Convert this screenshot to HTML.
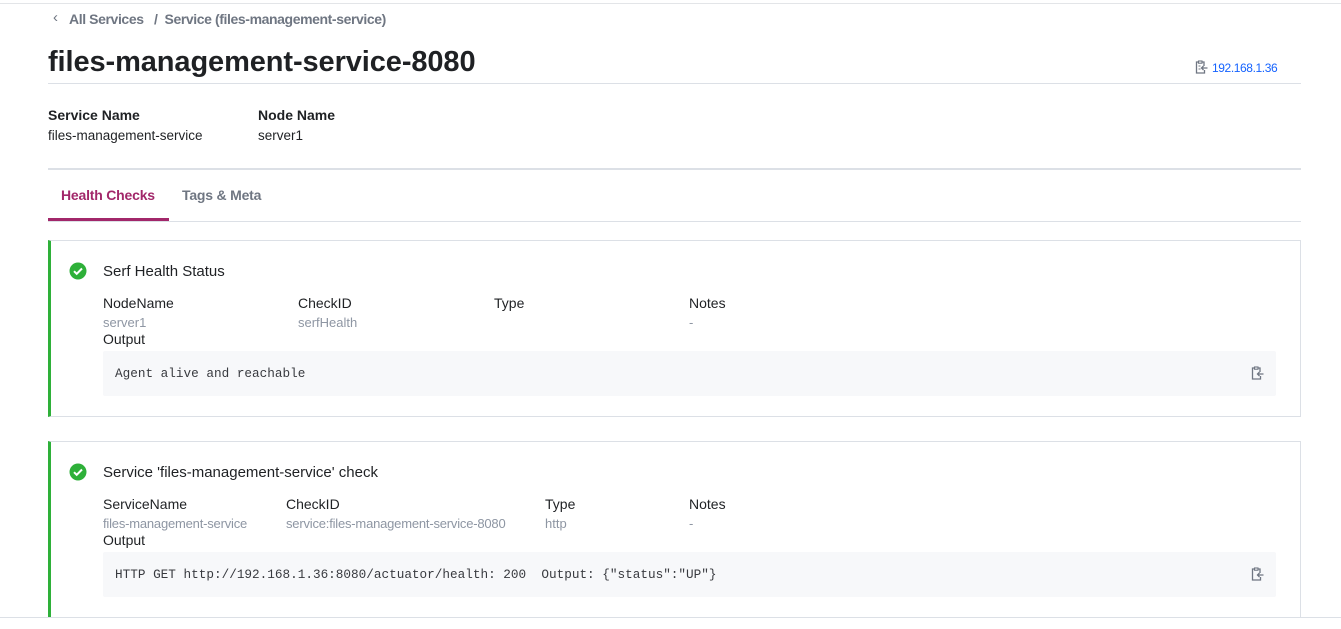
<!DOCTYPE html>
<html style="overflow:hidden;height:629px"><head><meta charset="utf-8"><style>
*{box-sizing:border-box;margin:0;padding:0}
body{width:1341px;height:629px;overflow:hidden;background:#fff;font-family:"Liberation Sans",sans-serif;color:#1f2124;position:relative}
.abs{position:absolute}
.lbl{font-size:14px;color:#1f2124}
.val{font-size:13px;color:#8e96a3}
.mono{font-family:"Liberation Mono",monospace;font-size:12.7px;color:#383a3f}
.card{position:absolute;left:48px;width:1253px;border:1px solid #dce0e6;border-left:3px solid #2eb039;background:#fff}
.pre{position:absolute;left:55px;width:1173px;height:45px;background:#f7f8fa;border-radius:2px}
</style></head><body>
<div class="abs" style="left:0;top:3px;width:1341px;height:1px;background:#e3e5e8"></div>
<div class="abs" style="left:53px;top:9px;font-size:15px;color:#6f7682">&#8249;</div>
<div class="abs" style="left:69px;top:11px;font-size:14px;color:#6f7682;font-weight:bold;letter-spacing:-0.4px">All Services&nbsp;&nbsp;&nbsp;/&nbsp;&nbsp;Service (files-management-service)</div>
<div class="abs" style="left:48px;top:46px;font-size:29px;font-weight:bold;color:#1f2124;letter-spacing:-0.1px">files-management-service-8080</div>
<svg class="abs" style="left:1195px;top:60px" width="13" height="14" viewBox="0 0 13 14"><path d="M3 2H1.5v11h8V10M7.5 2H9v4" fill="none" stroke="#6f7682" stroke-width="1.3"/><rect x="3.5" y="1" width="3.5" height="2.2" fill="none" stroke="#6f7682" stroke-width="1.1"/><path d="M12.5 8H6.5M8.5 6l-2 2 2 2" fill="none" stroke="#6f7682" stroke-width="1.3"/><path d="M3.5 6h2M3.5 9h2" stroke="#6f7682"/></svg>
<div class="abs" style="left:1212px;top:61px;font-size:12px;color:#1563ff;letter-spacing:-0.4px">192.168.1.36</div>
<div class="abs" style="left:48px;top:83px;width:1253px;height:1px;background:#dce0e6"></div>
<div class="abs lbl" style="left:48px;top:107px;font-weight:bold">Service Name</div>
<div class="abs" style="left:48px;top:128px;font-size:13.5px">files-management-service</div>
<div class="abs lbl" style="left:258px;top:107px;font-weight:bold">Node Name</div>
<div class="abs" style="left:258px;top:128px;font-size:13.5px">server1</div>
<div class="abs" style="left:48px;top:168px;width:1253px;height:2px;background:#dce0e6"></div>
<div class="abs" style="left:61px;top:187px;font-size:14px;color:#a2276a;font-weight:bold;letter-spacing:-0.2px">Health Checks</div>
<div class="abs" style="left:182px;top:187px;font-size:14px;color:#6f7682;font-weight:bold;letter-spacing:-0.2px">Tags &amp; Meta</div>
<div class="abs" style="left:48px;top:221px;width:1253px;height:1px;background:#dce0e6"></div>
<div class="abs" style="left:48px;top:218px;width:121px;height:3px;background:#a2276a"></div>

<div class="card" style="top:240px;height:177px">
 <svg class="abs" style="left:18px;top:21px" width="18" height="18" viewBox="0 0 18 18"><circle cx="9" cy="9" r="8.5" fill="#2eb039"/><path d="M5 9.2l2.7 2.6L13 6.5" fill="none" stroke="#fff" stroke-width="2"/></svg>
 <div class="abs" style="left:52px;top:22px;font-size:15px">Serf Health Status</div>
 <div class="abs lbl" style="left:52px;top:54px">NodeName</div>
 <div class="abs val" style="left:52px;top:74px">server1</div>
 <div class="abs lbl" style="left:247px;top:54px">CheckID</div>
 <div class="abs val" style="left:247px;top:74px">serfHealth</div>
 <div class="abs lbl" style="left:443px;top:54px">Type</div>
 <div class="abs lbl" style="left:638px;top:54px">Notes</div>
 <div class="abs val" style="left:638px;top:74px">-</div>
 <div class="abs lbl" style="left:52px;top:90px">Output</div>
 <div class="pre" style="left:52px;top:110px"><div class="abs mono" style="left:12px;top:15px">Agent alive and reachable</div>
 <svg class="abs" style="left:1148px;top:15px" width="13" height="14" viewBox="0 0 13 14"><path d="M3 2H1.5v11h8V10M7.5 2H9v4" fill="none" stroke="#6f7682" stroke-width="1.3"/><rect x="3.5" y="1" width="3.5" height="2.2" fill="none" stroke="#6f7682" stroke-width="1.1"/><path d="M12.5 8H6.5M8.5 6l-2 2 2 2" fill="none" stroke="#6f7682" stroke-width="1.3"/></svg></div>
</div>

<div class="card" style="top:441px;height:188px;border-bottom:none">
 <svg class="abs" style="left:18px;top:21px" width="18" height="18" viewBox="0 0 18 18"><circle cx="9" cy="9" r="8.5" fill="#2eb039"/><path d="M5 9.2l2.7 2.6L13 6.5" fill="none" stroke="#fff" stroke-width="2"/></svg>
 <div class="abs" style="left:52px;top:22px;font-size:15px">Service 'files-management-service' check</div>
 <div class="abs lbl" style="left:52px;top:54px">ServiceName</div>
 <div class="abs val" style="left:52px;top:74px;letter-spacing:-0.2px">files-management-service</div>
 <div class="abs lbl" style="left:235px;top:54px">CheckID</div>
 <div class="abs val" style="left:235px;top:74px;letter-spacing:-0.2px">service:files-management-service-8080</div>
 <div class="abs lbl" style="left:494px;top:54px">Type</div>
 <div class="abs val" style="left:494px;top:74px">http</div>
 <div class="abs lbl" style="left:638px;top:54px">Notes</div>
 <div class="abs val" style="left:638px;top:74px">-</div>
 <div class="abs lbl" style="left:52px;top:90px">Output</div>
 <div class="pre" style="left:52px;top:110px"><div class="abs mono" style="left:12px;top:15px;white-space:pre">HTTP GET http://192.168.1.36:8080/actuator/health: 200  Output: {"status":"UP"}</div>
 <svg class="abs" style="left:1148px;top:15px" width="13" height="14" viewBox="0 0 13 14"><path d="M3 2H1.5v11h8V10M7.5 2H9v4" fill="none" stroke="#6f7682" stroke-width="1.3"/><rect x="3.5" y="1" width="3.5" height="2.2" fill="none" stroke="#6f7682" stroke-width="1.1"/><path d="M12.5 8H6.5M8.5 6l-2 2 2 2" fill="none" stroke="#6f7682" stroke-width="1.3"/></svg></div>
</div>
<div class="abs" style="left:0;top:617px;width:1341px;height:12px;background:#fff;border-top:1px solid #dce0e6"></div>
</body></html>
